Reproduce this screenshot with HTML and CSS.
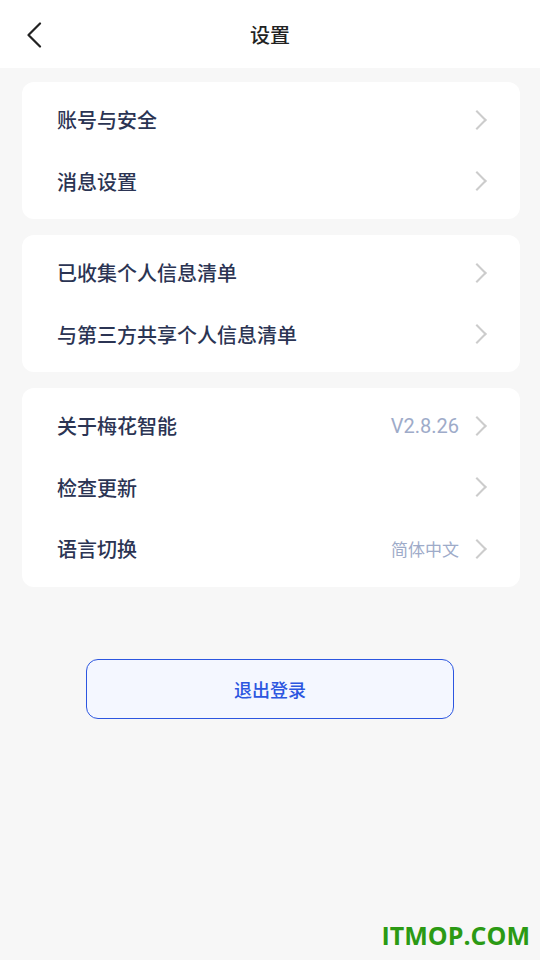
FILE: index.html
```html
<!DOCTYPE html>
<html lang="zh-CN">
<head>
    <meta charset="UTF-8">
    <meta name="viewport" content="width=device-width, initial-scale=1.0">
    <title>设置</title>
    <link rel="stylesheet" href="styles.css">
</head>
<body>
    <header class="topbar">
        <button class="back-btn" aria-label="返回">
            <svg width="16" height="26" viewBox="0 0 16 26"><path d="M14 1.5 L2.5 13 L14 24.5" fill="none" stroke="#222" stroke-width="2.2" stroke-linecap="round" stroke-linejoin="round"/></svg>
        </button>
        <h1>设置</h1>
    </header>

    <main class="content">
        <section class="card">
            <div class="row"><span class="label">账号与安全</span><span class="arrow"></span></div>
            <div class="row"><span class="label">消息设置</span><span class="arrow"></span></div>
        </section>

        <section class="card">
            <div class="row"><span class="label">已收集个人信息清单</span><span class="arrow"></span></div>
            <div class="row"><span class="label">与第三方共享个人信息清单</span><span class="arrow"></span></div>
        </section>

        <section class="card">
            <div class="row"><span class="label">关于梅花智能</span><span class="value version">V2.8.26</span><span class="arrow"></span></div>
            <div class="row"><span class="label">检查更新</span><span class="arrow"></span></div>
            <div class="row"><span class="label">语言切换</span><span class="value">简体中文</span><span class="arrow"></span></div>
        </section>

        <div class="logout-wrap">
            <button class="logout-btn">退出登录</button>
        </div>
    </main>

    <div class="watermark">ITMOP.COM</div>
</body>
</html>
```

FILE: styles.css
```css
:root {
    --background: #f7f7f7;
    --card: #ffffff;
    --text: #2b3453;
    --muted: #9eabc9;
    --arrow: #cccccc;
    --primary: #2c56e0;
    --primary-soft: #f4f7ff;
}

* {
    box-sizing: border-box;
}

body {
    margin: 0;
    min-height: 960px;
    background-color: var(--background);
    font-family: "Noto Sans CJK SC", "Noto Sans", sans-serif;
    color: var(--text);
    position: relative;
}

.topbar {
    height: 68px;
    background-color: var(--card);
    display: flex;
    align-items: center;
    justify-content: center;
    position: relative;
}

.topbar h1 {
    margin: 0;
    font-size: 20px;
    font-weight: 500;
    color: #222;
}

.back-btn {
    position: absolute;
    left: 26px;
    top: 22px;
    padding: 0;
    border: none;
    background: none;
    display: flex;
}

.content {
    padding: 14px 20px 0 22px;
    display: flex;
    flex-direction: column;
    gap: 16px;
}

.card {
    background-color: var(--card);
    border-radius: 12px;
    padding: 7px 0 7px 35px;
}

.row {
    height: 61.5px;
    display: flex;
    align-items: center;
    padding-right: 33px;
}

.label {
    flex: 1;
    font-size: 20px;
    font-weight: 500;
}

.value {
    font-size: 17px;
    color: var(--muted);
    margin-right: 11px;
}

.value.version {
    font-family: Roboto, "Noto Sans", sans-serif;
    font-size: 20px;
}

.arrow {
    width: 14px;
    height: 14px;
    border-top: 2px solid var(--arrow);
    border-right: 2px solid var(--arrow);
    transform: rotate(45deg);
    margin-right: 3px;
}

.logout-wrap {
    display: flex;
    justify-content: center;
    padding-top: 56px;
    padding-right: 2px;
}

.logout-btn {
    width: 368px;
    height: 60px;
    border: 1px solid var(--primary);
    border-radius: 12px;
    background-color: var(--primary-soft);
    color: var(--primary);
    font-family: "Noto Sans CJK SC", sans-serif;
    font-size: 18px;
    font-weight: 500;
}

.watermark {
    position: absolute;
    right: 10px;
    bottom: 8px;
    font-family: "Open Sans", sans-serif;
    font-weight: 700;
    font-size: 25px;
    color: #2b9a14;
}
```
